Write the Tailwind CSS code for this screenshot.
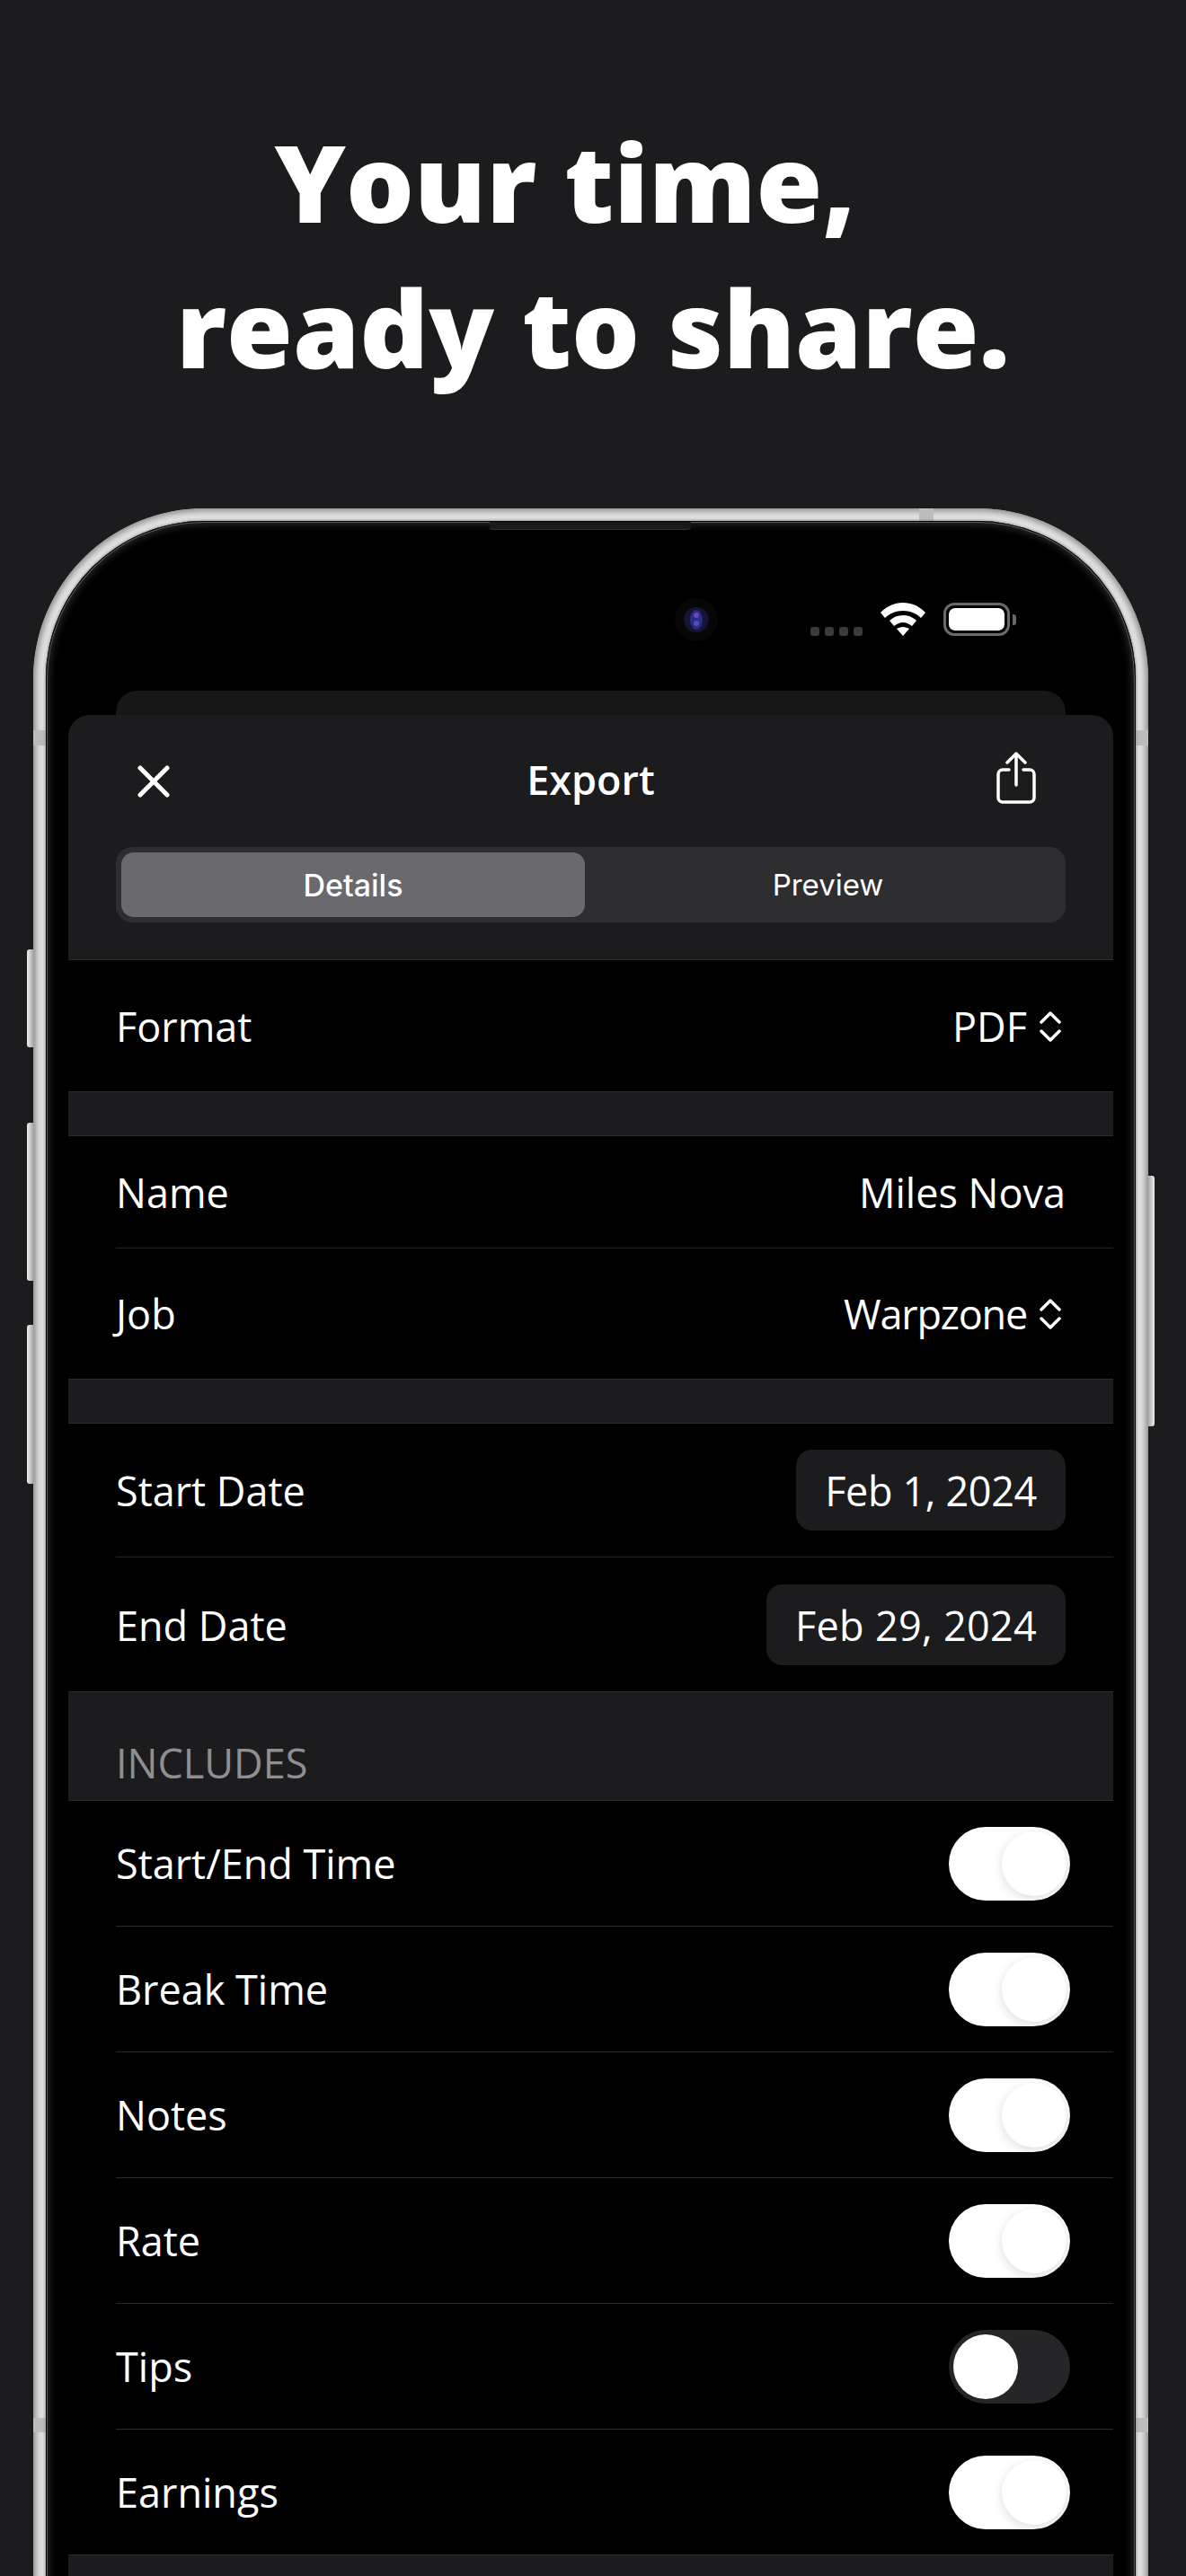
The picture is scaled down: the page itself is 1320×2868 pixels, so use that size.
<!DOCTYPE html>
<html lang="en">
<head>
    <meta charset="UTF-8">
    <meta name="viewport" content="width=device-width, initial-scale=1.0">
    <title>Your time, ready to share</title>
    <script src="https://cdn.jsdelivr.net/npm/@tailwindcss/browser@4"></script>
</head>
<body class="bg-[#1c1c1e]">
<div class="relative w-[1320px] h-[2868px] overflow-hidden font-['Open_Sans',sans-serif] text-white">
    <!-- Headline -->
    <h1 class="pt-[121px] pb-[3px] text-center font-extrabold text-[119.5px] leading-[162px]"><span class="inline-block pr-[62px]">Your time,</span><br>ready to share.</h1>

    <!-- Side buttons -->
    <div class="absolute left-[30px] top-[1057px] w-[7px] h-[109px] rounded-l-[3px] bg-gradient-to-r from-[#f0f0f0] to-[#a8a8a8]"></div>
    <div class="absolute left-[30px] top-[1250px] w-[7px] h-[176px] rounded-l-[3px] bg-gradient-to-r from-[#f0f0f0] to-[#a8a8a8]"></div>
    <div class="absolute left-[30px] top-[1475px] w-[7px] h-[177px] rounded-l-[3px] bg-gradient-to-r from-[#f0f0f0] to-[#a8a8a8]"></div>
    <div class="absolute left-[1278px] top-[1309px] w-[7px] h-[279px] rounded-r-[3px] bg-gradient-to-l from-[#f0f0f0] to-[#a8a8a8]"></div>

    <!-- Phone -->
    <div class="relative mt-[118px] ml-[37px] w-[1241px] h-[2500px] rounded-[190px] bg-[#e0e0e0] p-[14px] shadow-[inset_0_0_6px_3px_#8c8c8c]">
        <!-- antenna bands -->
        <div class="absolute left-0 top-[247px] w-[15px] h-[17px] bg-[#bcbcbc]"></div>
        <div class="absolute right-0 top-[247px] w-[15px] h-[17px] bg-[#bcbcbc]"></div>
        <div class="absolute left-[986px] top-0 w-[16px] h-[15px] bg-[#bcbcbc]"></div>
        <div class="absolute left-0 top-[2126px] w-[15px] h-[16px] bg-[#bcbcbc]"></div>
        <div class="absolute right-0 top-[2126px] w-[15px] h-[16px] bg-[#bcbcbc]"></div>

        <div class="relative h-full rounded-[176px] bg-black pt-[189px] shadow-[0_0_3px_1px_#9a9a9a,inset_0_0_0_1px_#000,inset_0_0_0_2px_#5a5a5a,inset_0_0_8px_4px_#2a2a2a]">
            <!-- speaker -->
            <div class="absolute left-[494px] top-[1px] w-[224px] h-[9px] rounded-b-[4px] border-b border-[#303030] bg-[#1a1a1a]"></div>

            <!-- camera -->
            <svg class="absolute left-[700px] top-[86px]" width="48" height="48" viewBox="0 0 48 48">
                <circle cx="24" cy="24" r="24" fill="#070708"/>
                <circle cx="24" cy="24" r="14" fill="#141530"/>
                <ellipse cx="24" cy="24" rx="7" ry="11" fill="#2a2a8a"/>
                <circle cx="24" cy="19" r="3" fill="#6a4ab0"/>
                <circle cx="24" cy="28" r="3" fill="#5a4ab0"/>
            </svg>

            <!-- Status bar -->
            <div class="absolute left-[851px] top-[118px] flex gap-[6px]">
                <span class="w-[10px] h-[10px] rounded-[3px] bg-[#3c3c3c]"></span>
                <span class="w-[10px] h-[10px] rounded-[3px] bg-[#3c3c3c]"></span>
                <span class="w-[10px] h-[10px] rounded-[3px] bg-[#3c3c3c]"></span>
                <span class="w-[10px] h-[10px] rounded-[3px] bg-[#3c3c3c]"></span>
            </div>
            <svg class="absolute left-[929px] top-[91px]" width="50" height="37" viewBox="0 0 50 37">
                <path d="M25 0C15 0 7 4 0 11l5 6c5-5 12-8 20-8s15 3 20 8l5-6C43 4 35 0 25 0z" fill="#fff"/>
                <path d="M25 14c-6 0-11 2-15 6l5 6c3-2 6-4 10-4s7 2 10 4l5-6c-4-4-9-6-15-6z" fill="#fff"/>
                <path d="M25 27c-3 0-5 1-7 2l7 8 7-8c-2-1-4-2-7-2z" fill="#fff"/>
            </svg>
            <div class="absolute left-[999px] top-[91px] flex items-center gap-[3px]">
                <div class="w-[74px] h-[37px] rounded-[12px] border-[3px] border-[#6a6a6a] p-[3px]">
                    <div class="w-full h-full rounded-[7px] bg-white"></div>
                </div>
                <div class="w-[4px] h-[12px] rounded-r-[3px] bg-[#6a6a6a]"></div>
            </div>

            <!-- Card behind the sheet -->
            <div class="mx-[78px] h-[27px] rounded-t-[24px] bg-[#171718]"></div>

            <!-- Sheet -->
            <div class="mx-[25px] rounded-t-[24px] bg-[#1c1c1e]">
                <!-- Sheet header -->
                <div class="grid grid-cols-[1fr_auto_1fr] items-center h-[147px] px-[77px]">
                    <svg width="36" height="36" viewBox="0 0 36 36" fill="none" stroke="#fff" stroke-width="5" stroke-linecap="round"><path d="M3 3l30 30M33 3L3 33"/></svg>
                    <span class="mb-[3px] font-semibold text-[45px]">Export</span>
                    <svg class="justify-self-end mr-[9px] mb-[8px]" width="44" height="58" viewBox="0 0 44 58" fill="none" stroke="#fff" stroke-width="3.5" stroke-linecap="round" stroke-linejoin="round"><path d="M14 20H7a5 5 0 0 0-5 5v26a5 5 0 0 0 5 5h30a5 5 0 0 0 5-5V25a5 5 0 0 0-5-5h-7"/><path d="M22 37V3M12 12l10-10 10 10"/></svg>
                </div>

                <!-- Segmented control -->
                <div class="mx-[53px] flex h-[84px] rounded-[18px] bg-[#2e2e31] p-[6px] font-['Inter',sans-serif] text-[34px]">
                    <div class="flex w-[516px] items-center justify-center rounded-[14px] bg-[#69696e] font-medium">Details</div>
                    <div class="flex flex-1 items-center justify-center pl-[12px] pt-[2px] text-[33px]">Preview</div>
                </div>
                <div class="h-[41px]"></div>

                <!-- Format -->
                <div class="flex h-[148px] items-center justify-between bg-black pl-[53px] pr-[53px] pt-[2px] border-y border-[#2c2c2e] text-[45px]">
                    <span>Format</span>
                    <span class="flex items-center gap-[14px]">PDF
                        <svg class="mr-[5px]" width="24" height="34" viewBox="0 0 24 34" fill="none" stroke="#fff" stroke-width="3.5" stroke-linecap="round" stroke-linejoin="round"><path d="M2 12L12 2l10 10M2 22l10 10 10-10"/></svg>
                    </span>
                </div>
                <div class="h-[48px]"></div>

                <!-- Name / Job -->
                <div class="bg-black border-y border-[#2c2c2e] text-[45px]">
                    <div class="flex h-[124px] items-center justify-between pl-[53px] pr-[53px] pt-[2px]">
                        <span>Name</span>
                        <span>Miles Nova</span>
                    </div>
                    <div class="ml-[53px] h-px bg-[#232325]"></div>
                    <div class="flex h-[145px] items-center justify-between pl-[53px] pr-[53px]">
                        <span>Job</span>
                        <span class="flex items-center gap-[14px]"><span class="tracking-[-1.2px]">Warpzone</span>
                            <svg class="mr-[5px]" width="24" height="34" viewBox="0 0 24 34" fill="none" stroke="#fff" stroke-width="3.5" stroke-linecap="round" stroke-linejoin="round"><path d="M2 12L12 2l10 10M2 22l10 10 10-10"/></svg>
                        </span>
                    </div>
                </div>
                <div class="h-[48px]"></div>

                <!-- Dates -->
                <div class="bg-black border-y border-[#2c2c2e] text-[45px]">
                    <div class="flex h-[148px] items-center justify-between pl-[53px] pr-[53px]">
                        <span class="pt-[2px]">Start Date</span>
                        <span class="flex h-[90px] items-center rounded-[18px] bg-[#1c1c1e] px-[32px] pt-[2px] tracking-[-0.35px]">Feb 1, 2024</span>
                    </div>
                    <div class="ml-[53px] h-px bg-[#232325]"></div>
                    <div class="flex h-[149px] items-center justify-between pl-[53px] pr-[53px]">
                        <span class="pt-[2px]">End Date</span>
                        <span class="flex h-[90px] items-center rounded-[18px] bg-[#1c1c1e] px-[32px] pt-[2px] tracking-[0.3px]">Feb 29, 2024</span>
                    </div>
                </div>

                <!-- Includes -->
                <div class="flex h-[120px] items-end pl-[53px] pb-[8px] text-[45px] text-[#8e8e93]">INCLUDES</div>

                <div class="bg-black border-y border-[#2c2c2e] text-[45px]">
                    <div class="flex h-[139px] items-center justify-between pl-[53px] pr-[48px]">
                        <span>Start/End Time</span>
                        <div class="relative w-[135px] h-[82px] rounded-full bg-white">
                            <div class="absolute right-[4px] top-[5px] w-[72px] h-[72px] rounded-full bg-white shadow-[0_3px_12px_rgba(0,0,0,0.14)]"></div>
                        </div>
                    </div>
                    <div class="ml-[53px] h-px bg-[#2a2a2c]"></div>
                    <div class="flex h-[139px] items-center justify-between pl-[53px] pr-[48px]">
                        <span>Break Time</span>
                        <div class="relative w-[135px] h-[82px] rounded-full bg-white">
                            <div class="absolute right-[4px] top-[5px] w-[72px] h-[72px] rounded-full bg-white shadow-[0_3px_12px_rgba(0,0,0,0.14)]"></div>
                        </div>
                    </div>
                    <div class="ml-[53px] h-px bg-[#2a2a2c]"></div>
                    <div class="flex h-[139px] items-center justify-between pl-[53px] pr-[48px]">
                        <span>Notes</span>
                        <div class="relative w-[135px] h-[82px] rounded-full bg-white">
                            <div class="absolute right-[4px] top-[5px] w-[72px] h-[72px] rounded-full bg-white shadow-[0_3px_12px_rgba(0,0,0,0.14)]"></div>
                        </div>
                    </div>
                    <div class="ml-[53px] h-px bg-[#2a2a2c]"></div>
                    <div class="flex h-[139px] items-center justify-between pl-[53px] pr-[48px]">
                        <span>Rate</span>
                        <div class="relative w-[135px] h-[82px] rounded-full bg-white">
                            <div class="absolute right-[4px] top-[5px] w-[72px] h-[72px] rounded-full bg-white shadow-[0_3px_12px_rgba(0,0,0,0.14)]"></div>
                        </div>
                    </div>
                    <div class="ml-[53px] h-px bg-[#2a2a2c]"></div>
                    <div class="flex h-[139px] items-center justify-between pl-[53px] pr-[48px]">
                        <span>Tips</span>
                        <div class="relative w-[135px] h-[82px] rounded-full bg-[#262628]">
                            <div class="absolute left-[5px] top-[5px] w-[72px] h-[72px] rounded-full bg-white"></div>
                        </div>
                    </div>
                    <div class="ml-[53px] h-px bg-[#2a2a2c]"></div>
                    <div class="flex h-[139px] items-center justify-between pl-[53px] pr-[48px]">
                        <span>Earnings</span>
                        <div class="relative w-[135px] h-[82px] rounded-full bg-white">
                            <div class="absolute right-[4px] top-[5px] w-[72px] h-[72px] rounded-full bg-white shadow-[0_3px_12px_rgba(0,0,0,0.14)]"></div>
                        </div>
                    </div>
                </div>
                <div class="h-[200px]"></div>
            </div>
        </div>
    </div>
</div>
</body>
</html>
